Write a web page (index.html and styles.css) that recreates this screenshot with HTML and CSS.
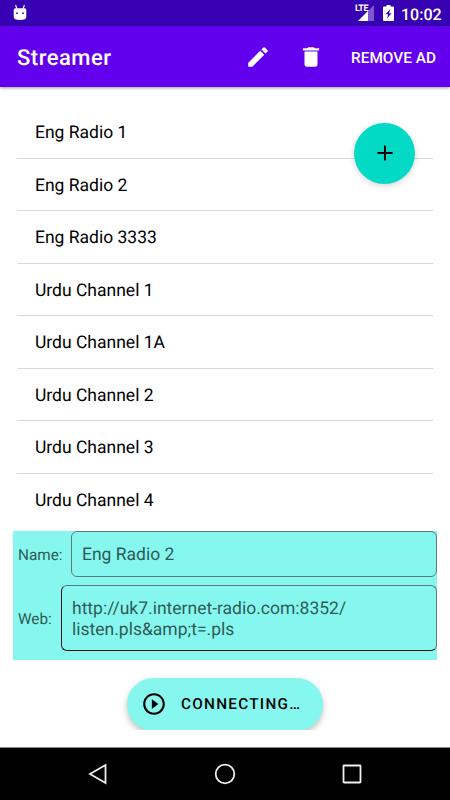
FILE: index.html
```html
<!DOCTYPE html>
<html lang="en">
<head>
<meta charset="utf-8">
<title>Streamer</title>
<link rel="stylesheet" href="styles.css">
</head>
<body>
<div class="screen">
  <div class="status">
    <svg class="robot" width="14" height="17" viewBox="0 0 14 17"><path d="M2.600 1l1.200 3.500M11.400 1l-1.200 3.500" stroke="#fff" stroke-width="1.100"/><path d="M.7 6Q.7 4.300 2.400 4.300H11.600Q13.300 4.300 13.300 6V13Q13.300 16 7 16Q.7 16 .7 13z" fill="#fff"/><circle cx="4" cy="9.200" r=".9" fill="#3700b3"/><circle cx="10" cy="9.200" r=".9" fill="#3700b3"/></svg>
    <div class="status-right">
      <div class="signal">
        <span class="lte">LTE</span>
        <svg width="19" height="17" viewBox="0 0 19 17"><path d="M19 0v16H3z" fill="#fff" fill-opacity=".35"/><path d="M13 6v10H3z" fill="#fff"/></svg>
      </div>
      <svg class="battery" width="11" height="16" viewBox="0 0 11 16"><path d="M3.500 0h4v1.500H10q1 0 1 1V15q0 1-1 1H1q-1 0-1-1V2.500q0-1 1-1h2.500z" fill="#fff"/><path d="M7.300 4L2.500 9.200h2.700L4 13.500l4.600-5.300H6z" fill="#3700b3"/></svg>
      <span class="clock">10:02</span>
    </div>
  </div>
  <header class="appbar">
    <h1>Streamer</h1>
    <svg class="edit" width="26" height="26" viewBox="0 0 24 24" fill="#fff"><path d="M3 17.250V21h3.750L17.810 9.940l-3.750-3.750L3 17.250zM20.710 7.040a1 1 0 0 0 0-1.410l-2.340-2.340a1 1 0 0 0-1.410 0l-1.830 1.830 3.750 3.750 1.830-1.830z"/></svg>
    <svg class="trash" width="26" height="26" viewBox="0 0 24 24" fill="#fff"><path d="M6 19c0 1.100.9 2 2 2h8c1.100 0 2-.9 2-2V7H6v12zM19.500 4h-4l-1-1h-5l-1 1h-4v2h15V4z"/></svg>
    <span class="remove">REMOVE AD</span>
  </header>
  <main>
    <ul class="list">
      <li>Eng Radio 1</li>
      <li>Eng Radio 2</li>
      <li>Eng Radio 3333</li>
      <li>Urdu Channel 1</li>
      <li>Urdu Channel 1A</li>
      <li>Urdu Channel 2</li>
      <li>Urdu Channel 3</li>
      <li>Urdu Channel 4</li>
    </ul>
    <div class="form">
      <div class="row"><span class="label">Name:</span><div class="field">Eng Radio 2</div></div>
      <div class="row web"><span class="label">Web:</span><div class="field">http://uk7.internet-radio.com:8352/<br>listen.pls&amp;amp;t=.pls</div></div>
    </div>
    <div class="action">
      <div class="pill">
        <svg width="26" height="26" viewBox="0 0 24 24"><path d="M10 16.500l6-4.500-6-4.500v9zM12 2C6.480 2 2 6.480 2 12s4.480 10 10 10 10-4.480 10-10S17.520 2 12 2zm0 18c-4.410 0-8-3.590-8-8s3.590-8 8-8 8 3.590 8 8-3.590 8-8 8z"/></svg>
        <span>CONNECTING…</span>
      </div>
    </div>
    <div class="fab"><svg width="26" height="26" viewBox="0 0 24 24"><path d="M19 12.900h-6.100v6.100h-1.800v-6.100H5v-1.800h6.100V5h1.800v6.100H19z"/></svg></div>
  </main>
  <nav class="navbar">
    <svg width="22" height="24" viewBox="0 0 22 24"><path d="M18.500 3v18L3 12z"/></svg>
    <svg width="22" height="24" viewBox="0 0 22 24"><circle cx="11" cy="12" r="9.300"/></svg>
    <svg width="22" height="24" viewBox="0 0 22 24"><rect x="2.500" y="3.500" width="17" height="17" rx=".5"/></svg>
  </nav>
</div>
</body>
</html>
```
FILE: styles.css
```css
* { box-sizing: border-box; }
body { margin: 0; font-family: Roboto, "Liberation Sans", sans-serif; text-rendering: geometricPrecision; }
svg { display: block; flex: none; }
.screen { width: 450px; height: 800px; display: flex; flex-direction: column; background: #fff; overflow: hidden; }
.status { height: 26px; flex: none; background: #3700b3; display: flex; justify-content: space-between; padding: 0 9px 0 13px; }
.robot { margin-top: 4px; }
.status-right { display: flex; align-items: flex-start; color: #fff; }
.signal { position: relative; margin: 5px 9px 0 0; }
.lte { position: absolute; left: 0; top: 0; font-size: 9px; line-height: 9px; font-weight: 700; letter-spacing: -.5px; }
.battery { margin: 5px 7px 0 0; }
.clock { font-size: 16px; line-height: 29px; font-weight: 500; width: 40px; white-space: nowrap; }
.appbar { height: 61px; flex: none; background: #6200ee; color: #fff; display: flex; align-items: center; padding: 0 13px 0 17px; box-shadow: 0 1px 3px rgba(0,0,0,.4); z-index: 1; }
h1 { margin: 4px 0 0; font-size: 22px; line-height: 26px; font-weight: 500; flex: 1; letter-spacing: .5px; }
.edit { margin-right: 27px; }
.trash { margin-right: 27px; }
.remove { width: 86px; margin-top: 2px; font-size: 15.400px; font-weight: 500; white-space: nowrap; }
main { height: 660px; flex: none; position: relative; padding: 19px 13px 0; }
.list { list-style: none; margin: 0 4px; padding: 0; }
.list li { height: 52.500px; padding: 1px 18px 0; line-height: 52.500px; font-size: 17.500px; color: #000; border-bottom: 1px solid #dadada; }
.list li:last-child { border-bottom: 0; }
.form { margin-top: 5px; height: 129px; background: #86f7ee; padding-left: 5px; color: #2f5b57; }
.row { display: flex; align-items: center; height: 46px; }
.row.web { height: 66px; margin-top: 8px; }
.label { font-size: 15.300px; width: 53px; flex: none; padding-top: 2px; }
.web .label { width: 43px; }
.field { flex: 1; height: 100%; border: 1px solid #5a7a78; border-radius: 6px; padding: 2px 0 0 10px; font-size: 17.500px; line-height: 20.500px; display: flex; align-items: center; }
.web .field { border-color: #5a7a78 #5a7a78 #34100f #34100f; padding-top: 3px; }
.action { height: 70px; overflow: hidden; padding: 17.500px 0 0 114px; }
.pill { width: 196px; height: 53px; border-radius: 27px; background: #86f7ee; display: flex; align-items: center; padding-left: 14px; gap: 14px; font-size: 15.300px; font-weight: 500; letter-spacing: 1.270px; box-shadow: 0 3px 6px rgba(0,0,0,.25); }
.fab { position: absolute; left: 354px; top: 35.500px; width: 61px; height: 61px; border-radius: 50%; background: #03dac5; display: flex; align-items: center; justify-content: center; box-shadow: 0 2px 6px rgba(0,0,0,.16); }
.navbar { height: 53px; flex: none; background: #000; border-top: 1px solid #888; display: flex; align-items: center; justify-content: space-between; padding: 0 87px; }
.navbar svg { fill: none; stroke: #eee; stroke-width: 1.800; }
```
